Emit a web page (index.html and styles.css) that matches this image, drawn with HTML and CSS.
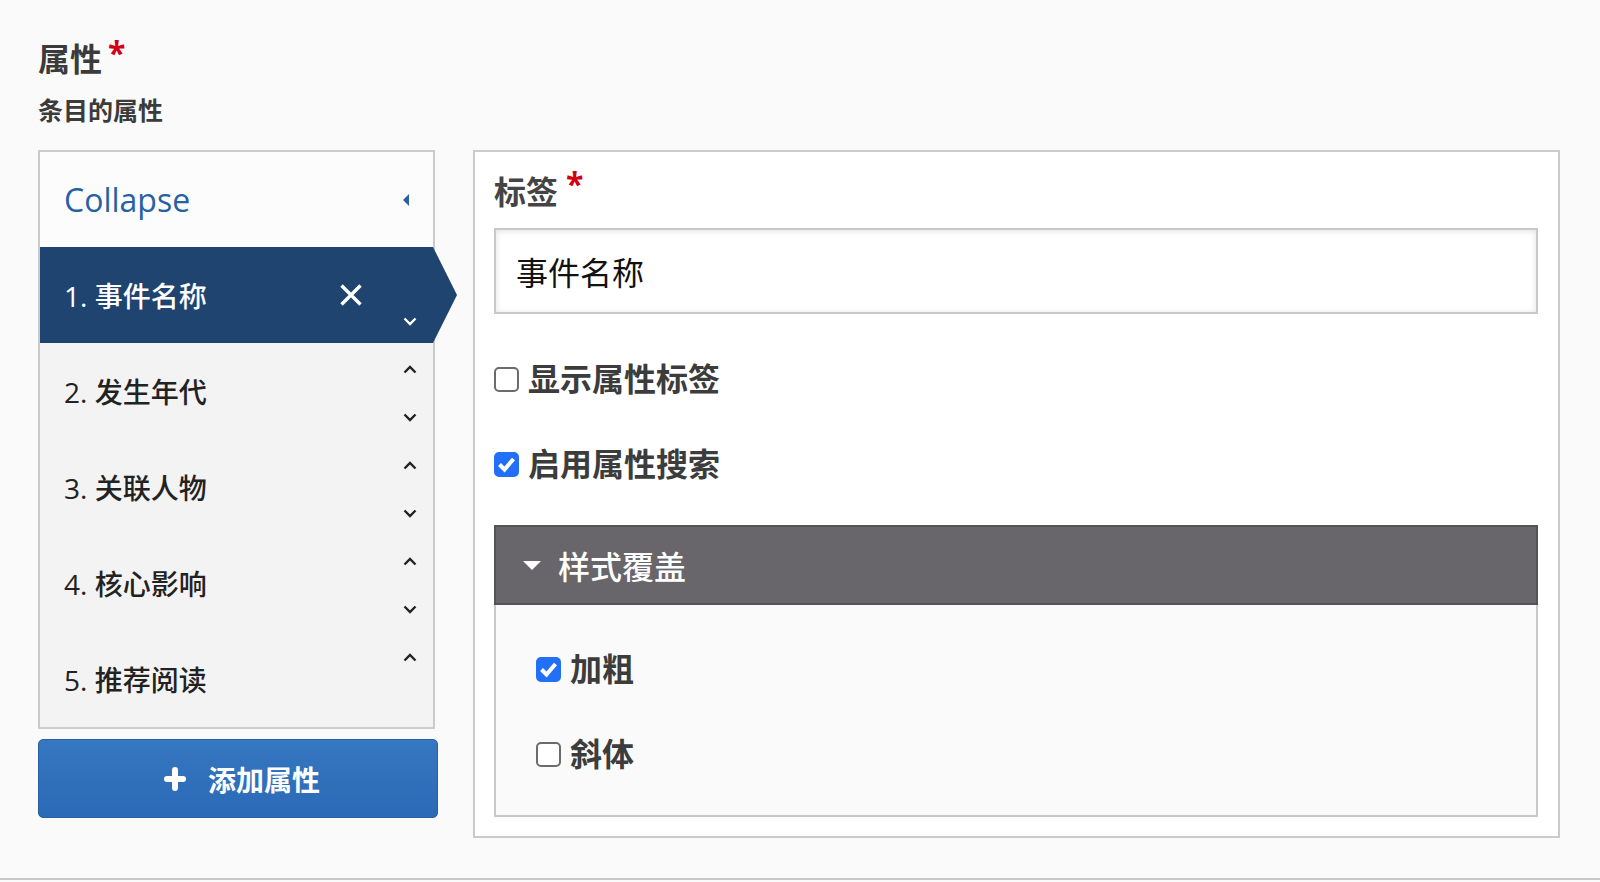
FILE: index.html
```html
<!DOCTYPE html>
<html lang="zh-CN">
<head>
<meta charset="utf-8">
<title>属性</title>
<link rel="stylesheet" href="styles.css">
</head>
<body>
<div class="page">
  <h2 class="title">属性<span class="req">*</span></h2>
  <p class="desc">条目的属性</p>
  <div class="editor">
    <div class="sidebar">
      <ul class="list">
        <li class="collapse">
          <span class="collapse-text">Collapse</span>
          <svg class="caret" width="6" height="12" viewBox="0 0 6 12"><path d="M6 0V12L0 6Z"/></svg>
        </li>
        <li class="item active">
          <span class="name">1. 事件名称</span>
          <svg class="remove" width="24" height="24" viewBox="0 0 24 24"><path d="M2.5 2.5L21.5 21.5M21.5 2.5L2.5 21.5"/></svg>
          <span class="moves">
            <svg class="chev hidden" width="14" height="9" viewBox="0 0 14 9"><path d="M1.5 7.5L7 2L12.5 7.5"/></svg>
            <svg class="chev" width="14" height="9" viewBox="0 0 14 9"><path d="M1.5 1.5L7 7L12.5 1.5"/></svg>
          </span>
        </li>
        <li class="item">
          <span class="name">2. 发生年代</span>
          <span class="moves">
            <svg class="chev" width="14" height="9" viewBox="0 0 14 9"><path d="M1.5 7.5L7 2L12.5 7.5"/></svg>
            <svg class="chev" width="14" height="9" viewBox="0 0 14 9"><path d="M1.5 1.5L7 7L12.5 1.5"/></svg>
          </span>
        </li>
        <li class="item">
          <span class="name">3. 关联人物</span>
          <span class="moves">
            <svg class="chev" width="14" height="9" viewBox="0 0 14 9"><path d="M1.5 7.5L7 2L12.5 7.5"/></svg>
            <svg class="chev" width="14" height="9" viewBox="0 0 14 9"><path d="M1.5 1.5L7 7L12.5 1.5"/></svg>
          </span>
        </li>
        <li class="item">
          <span class="name">4. 核心影响</span>
          <span class="moves">
            <svg class="chev" width="14" height="9" viewBox="0 0 14 9"><path d="M1.5 7.5L7 2L12.5 7.5"/></svg>
            <svg class="chev" width="14" height="9" viewBox="0 0 14 9"><path d="M1.5 1.5L7 7L12.5 1.5"/></svg>
          </span>
        </li>
        <li class="item">
          <span class="name">5. 推荐阅读</span>
          <span class="moves">
            <svg class="chev" width="14" height="9" viewBox="0 0 14 9"><path d="M1.5 7.5L7 2L12.5 7.5"/></svg>
            <svg class="chev hidden" width="14" height="9" viewBox="0 0 14 9"><path d="M1.5 1.5L7 7L12.5 1.5"/></svg>
          </span>
        </li>
      </ul>
      <button class="add" type="button">
        <svg class="plus" width="22" height="24" viewBox="0 0 22 24"><path d="M11 3V21M3 12H19"/></svg>
        <span>添加属性</span>
      </button>
    </div>

    <div class="panel">
      <label class="label">标签<span class="req">*</span></label>
      <input class="text-input" type="text" value="事件名称">
      <div class="checks">
        <label class="check"><span class="box"></span>显示属性标签</label>
        <label class="check"><span class="box on"><svg width="25" height="25" viewBox="0 0 25 25"><path d="M5.5 12.5L10.5 17.5L19.5 7"/></svg></span>启用属性搜索</label>
      </div>
      <div class="fs">
        <div class="fs-head">
          <svg class="tri" width="18" height="9" viewBox="0 0 18 9"><path d="M0 0H18L9 9Z"/></svg>
          <span>样式覆盖</span>
        </div>
        <div class="fs-body">
          <label class="check"><span class="box on"><svg width="25" height="25" viewBox="0 0 25 25"><path d="M5.5 12.5L10.5 17.5L19.5 7"/></svg></span>加粗</label>
          <label class="check"><span class="box"></span>斜体</label>
        </div>
      </div>
    </div>
  </div>
</div>
</body>
</html>
```

FILE: styles.css
```css
* { box-sizing: border-box; }

html, body {
  margin: 0;
  padding: 0;
  background: #fafafa;
}

body {
  font-family: "Open Sans", "Noto Sans CJK SC", sans-serif;
  color: #222;
}

.page {
  padding: 43px 40px 40px 38px;
  border-bottom: 2px solid #c8c8c8;
}

.title {
  margin: 0;
  font-size: 32px;
  line-height: 32px;
  font-weight: 700;
  color: #3b3b3b;
}

.req {
  color: #d20014;
  font-weight: 700;
  font-size: 32px;
  line-height: 0;
  margin-left: 6px;
  vertical-align: 6px;
}

.desc {
  margin: 23px 0 0;
  font-size: 25px;
  line-height: 25px;
  font-weight: 700;
  color: #3b3b3b;
}

.editor {
  display: flex;
  align-items: flex-start;
  margin-top: 27px;
}

.sidebar {
  width: 400px;
  flex: none;
}

.list {
  list-style: none;
  margin: 0;
  padding: 0;
  width: 397px;
  border: 2px solid #cbcbcb;
  background: #f3f3f3;
}

.collapse {
  height: 95px;
  background: #fcfcfc;
  display: flex;
  align-items: center;
  justify-content: space-between;
  padding: 0 24px;
}

.collapse-text {
  font-size: 32px;
  color: #2761a3;
}

.caret { fill: #2761a3; }

.item {
  position: relative;
  height: 96px;
  display: flex;
  align-items: center;
  padding: 0 16px 0 24px;
}

.name {
  flex: 1;
  font-size: 28px;
  font-weight: 500;
  color: #222;
}

.moves {
  align-self: stretch;
  display: flex;
  flex-direction: column;
  justify-content: space-between;
  padding: 22px 0 17px;
}

.chev {
  display: block;
  fill: none;
  stroke: #222;
  stroke-width: 2.4;
}

.chev.hidden { visibility: hidden; }

.item.active {
  background: #1f4470;
}

.item.active::after {
  content: "";
  position: absolute;
  left: 100%;
  top: 0;
  border-left: 24px solid #1f4470;
  border-top: 48px solid transparent;
  border-bottom: 48px solid transparent;
}

.item.active .name { color: #fff; }
.item.active .chev { stroke: #fff; }

.remove {
  fill: none;
  stroke: #fff;
  stroke-width: 3.4;
  margin-right: 40px;
}

.add {
  margin-top: 10px;
  width: 400px;
  height: 79px;
  border: 1px solid #29609f;
  border-radius: 5px;
  background: linear-gradient(#3677c1, #2b6ab6);
  display: flex;
  align-items: center;
  justify-content: center;
  gap: 22px;
  font-family: "Open Sans", "Noto Sans CJK SC", sans-serif;
  font-size: 28px;
  font-weight: 700;
  color: #fff;
  padding: 0 0 0 8px;
}

.plus {
  fill: none;
  stroke: #fff;
  stroke-width: 6;
  stroke-linecap: round;
}

.panel {
  flex: 1;
  margin-left: 35px;
  background: #fff;
  border: 2px solid #cbcbcb;
  padding: 24px 20px 19px 19px;
}

.label {
  display: block;
  font-size: 32px;
  line-height: 32px;
  font-weight: 700;
  color: #444;
}

.label .req {
  margin-left: 8px;
  vertical-align: 8px;
}

.text-input {
  display: block;
  width: 100%;
  height: 86px;
  margin-top: 20px;
  border: 2px solid #c8c8c8;
  background: #fff;
  box-shadow: inset 0 1px 6px rgba(0, 0, 0, 0.12);
  padding: 0 20px;
  font-family: "Open Sans", "Noto Sans CJK SC", sans-serif;
  font-size: 32px;
  color: #111;
  outline: none;
}

.checks {
  display: flex;
  flex-direction: column;
  gap: 37px;
  margin: 41px 0 37px;
}

.check {
  display: flex;
  align-items: center;
  height: 48px;
  gap: 9px;
  font-size: 32px;
  line-height: 48px;
  font-weight: 700;
  color: #3c3c3c;
}

.box {
  width: 25px;
  height: 25px;
  flex: none;
  border: 2px solid #6b6b6b;
  border-radius: 5px;
  background: #fff;
  position: relative;
}

.box.on {
  background: #2170f7;
  border-color: #2170f7;
}

.box svg {
  position: absolute;
  left: -2px;
  top: -2px;
  fill: none;
  stroke: #fff;
  stroke-width: 4;
}

.fs-head {
  height: 80px;
  background: #68666a;
  border: 2px solid #555358;
  display: flex;
  align-items: center;
  padding-left: 27px;
  gap: 17px;
  font-size: 32px;
  font-weight: 500;
  color: #fff;
}

.tri { fill: #fff; }

.fs-body {
  background: #fafafa;
  border: 2px solid #c8c8c8;
  border-top: 0;
  padding: 40px 40px 37px 40px;
  display: flex;
  flex-direction: column;
  gap: 37px;
}
```
